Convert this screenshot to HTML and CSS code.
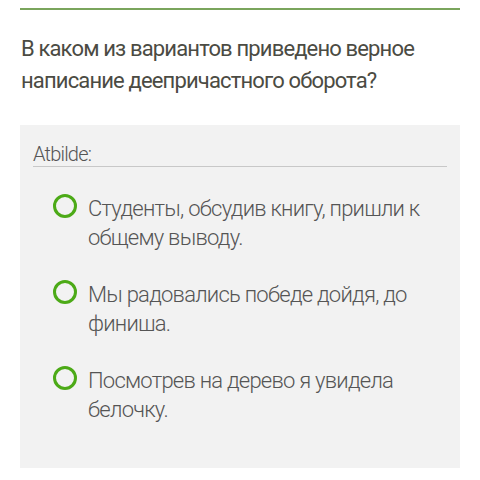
FILE: index.html
```html
<!DOCTYPE html>
<html lang="ru">
<head>
    <meta charset="UTF-8">
    <meta name="viewport" content="width=device-width, initial-scale=1.0">
    <title>Вопрос</title>
    <link rel="stylesheet" href="styles.css">
</head>
<body>
    <div class="page">
        <div class="top-line"></div>
        <div class="question">В каком из вариантов приведено верное написание деепричастного оборота?</div>
        <div class="answer-box">
            <div class="answer-label">Atbilde:</div>
            <div class="options">
                <div class="option">
                    <span class="radio"></span>
                    <span class="option-text">Студенты, обсудив книгу, пришли к общему выводу.</span>
                </div>
                <div class="option">
                    <span class="radio"></span>
                    <span class="option-text">Мы радовались победе дойдя, до финиша.</span>
                </div>
                <div class="option">
                    <span class="radio"></span>
                    <span class="option-text">Посмотрев на дерево я увидела белочку.</span>
                </div>
            </div>
        </div>
    </div>
</body>
</html>
```

FILE: styles.css
```css
body {
    margin: 0;
    background: #ffffff;
    font-family: Roboto, "Noto Sans", sans-serif;
}
.page {
    padding: 8px 20px 0 20px;
}
/* зелёная линия сверху */
.top-line {
    height: 2px;
    background: #7aa55c;
}
.question {
    margin-top: 23px;
    font-size: 22px;
    line-height: 32px;
    letter-spacing: -0.85px;
    color: #4b4b43;
    padding-left: 1px;
}
.answer-box {
    margin-top: 28px;
    background: #f2f2f2;
    padding: 17px 13px 36px 13px;
    height: 290px;
}
.answer-label {
    font-size: 20px;
    font-weight: 300;
    line-height: 24px;
    letter-spacing: -0.8px;
    color: #555555;
    border-bottom: 1px solid #c8c8c8;
}
.options {
    display: flex;
    flex-direction: column;
    gap: 28px;
    margin-top: 27px;
    padding-left: 20px;
}
.option {
    display: flex;
    align-items: flex-start;
    gap: 11px;
}
.radio {
    flex: none;
    width: 18px;
    height: 18px;
    border: 3px solid #4caa17;
    border-radius: 50%;
}
.option-text {
    font-size: 22px;
    font-weight: 300;
    line-height: 29px;
    letter-spacing: -0.75px;
    color: #555555;
}
```
